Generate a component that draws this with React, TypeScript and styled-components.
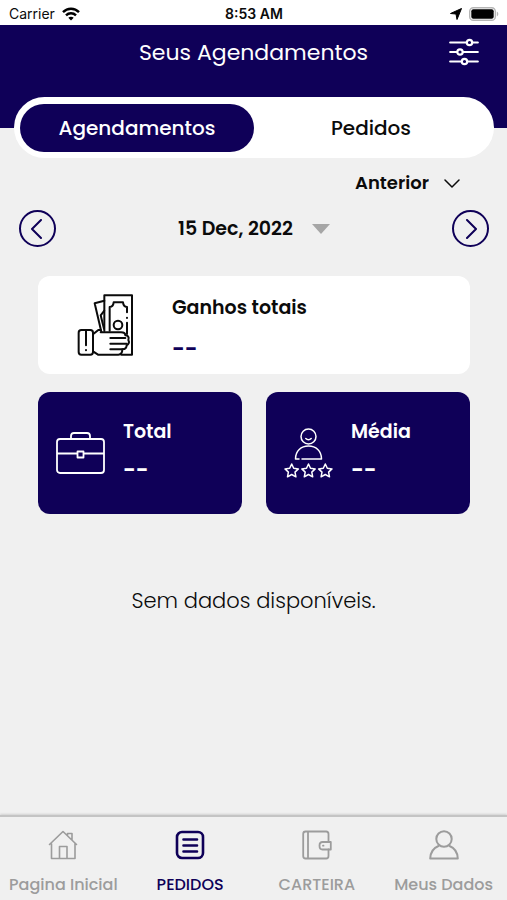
import React, { useState } from "react";
import styled, { createGlobalStyle } from "styled-components";

const navy = "#0f0058";
const page = "#f0f0f0";
const muted = "#9c9c9c";

const GlobalStyle = createGlobalStyle`
  * { box-sizing: border-box; }
  body { margin: 0; background: ${page}; }
  button, select { font: inherit; color: inherit; background: none; border: 0; padding: 0; cursor: pointer; }
  svg { display: block; flex: none; }
`;

const Screen = styled.div`
  min-height: 100vh;
  display: flex;
  flex-direction: column;
  background: ${page};
  color: #0b0b0b;
  font-family: Poppins, Inter, sans-serif;
`;

const StatusBar = styled.div`
  height: 25px;
  padding: 2px 8px 0 9px;
  display: grid;
  grid-template-columns: 1fr auto 1fr;
  align-items: center;
  background: #fff;
  font-family: Inter, sans-serif;
  font-size: 14px;
  line-height: 20px;
`;

const StatusGroup = styled.div<{ $end?: boolean }>`
  display: flex;
  align-items: center;
  gap: 7px;
  justify-content: ${(p) => (p.$end ? "flex-end" : "flex-start")};
`;

const Clock = styled.span`
  font-weight: 600;
`;

const Header = styled.header`
  height: 103px;
  padding: 9px 28px 0;
  display: grid;
  grid-template-columns: 30px 1fr 30px;
  align-items: start;
  background: ${navy};
  color: #fff;
`;

const Title = styled.h1`
  grid-column: 2;
  margin: 0;
  text-align: center;
  font-size: 22px;
  line-height: 38px;
  font-weight: 400;
`;

const IconButton = styled.button`
  height: 36px;
  display: flex;
  align-items: center;
`;

const Tabs = styled.div`
  margin: -31px 13px 0 14px;
  padding: 7px 6px 6px;
  display: grid;
  grid-template-columns: 1fr 1fr;
  background: #fff;
  border-radius: 31px;
`;

const Tab = styled.button<{ $active: boolean }>`
  height: 48px;
  border-radius: 24px;
  font-size: 20px;
  font-weight: 500;
  background: ${(p) => (p.$active ? navy : "transparent")};
  color: ${(p) => (p.$active ? "#fff" : "#0b0b0b")};
`;

const Filter = styled.label`
  align-self: flex-end;
  margin: 10px 47px 0 0;
  display: flex;
  align-items: center;
  gap: 15px;
`;

const FilterSelect = styled.select`
  appearance: none;
  field-sizing: content;
  font-size: 18px;
  line-height: 30px;
  font-weight: 600;
`;

const DateRow = styled.div`
  margin-top: 12px;
  padding: 0 18px 0 19px;
  display: flex;
  align-items: center;
  justify-content: space-between;
`;

const RoundButton = styled.button`
  width: 37px;
  height: 37px;
  display: grid;
  place-items: center;
  border: 2px solid ${navy};
  border-radius: 50%;
  color: ${navy};
`;

const DateButton = styled.button`
  display: flex;
  align-items: center;
  gap: 19px;
  font-size: 19px;
  font-weight: 600;
`;

const Cards = styled.section`
  margin: 29px 37px 0 38px;
  display: grid;
  grid-template-columns: 1fr 1fr;
  gap: 18px 24px;
`;

const EarningsCard = styled.article`
  grid-column: 1 / -1;
  height: 98px;
  padding-left: 39px;
  display: flex;
  align-items: center;
  gap: 38px;
  background: #fff;
  border-radius: 12px;
`;

const StatCard = styled.article`
  height: 122px;
  padding-left: 18px;
  display: flex;
  align-items: center;
  gap: 18px;
  background: ${navy};
  color: #fff;
  border-radius: 12px;
`;

const Figures = styled.div<{ $compact?: boolean }>`
  display: grid;
  gap: ${(p) => (p.$compact ? "3px" : "6px")};
  padding: ${(p) => (p.$compact ? "0 0 4px" : "8px 0 0")};
`;

const Label = styled.h2`
  margin: 0;
  font-size: 19px;
  line-height: 36px;
  font-weight: 600;
`;

const Value = styled.p<{ $accent?: boolean }>`
  margin: 0;
  font-size: 22px;
  line-height: 36px;
  font-weight: 600;
  color: ${(p) => (p.$accent ? navy : "inherit")};
`;

const Empty = styled.p`
  margin: 69px 20px;
  text-align: center;
  font-size: 21px;
  line-height: 36px;
  font-weight: 300;
`;

const Nav = styled.nav`
  height: 85px;
  margin-top: auto;
  padding-top: 13px;
  display: grid;
  grid-template-columns: repeat(4, 1fr);
  border-top: 2px solid #c4c4c4;
  box-shadow: 0 -1px 2px #d0d0d0;
`;

const NavItem = styled.a<{ $active?: boolean }>`
  display: flex;
  flex-direction: column;
  align-items: center;
  gap: 13px;
  text-decoration: none;
  white-space: nowrap;
  font-size: 16px;
  line-height: 24px;
  font-weight: 500;
  color: ${(p) => (p.$active ? navy : muted)};
`;

const WifiIcon = () => (
  <svg width="18" height="14" viewBox="0 0 18 14" fill="none" stroke="#000" strokeWidth="2.4" aria-hidden="true">
    <path d="M1 5.2C5.4.6 12.6.6 17 5.2M4 8.4c2.8-2.8 7.2-2.8 10 0" />
    <path d="M9 13.6 6.3 10.8c1.5-1.4 3.9-1.4 5.4 0z" fill="#000" stroke="none" />
  </svg>
);

const LocationIcon = () => (
  <svg width="12" height="12" viewBox="0 0 12 12" aria-hidden="true">
    <path d="M11.5.5 7 11.5 6 6 .5 5.5z" fill="#000" stroke="#000" strokeLinejoin="round" />
  </svg>
);

const BatteryIcon = () => (
  <svg width="30" height="14" viewBox="0 0 30 14" aria-hidden="true">
    <rect x=".7" y=".7" width="25.6" height="12.6" rx="3.6" fill="#fff" stroke="#b5b5b5" strokeWidth="1.4" />
    <rect x="2.3" y="2.3" width="22.4" height="9.4" rx="2" fill="#000" />
    <path d="M27.8 4.6c2 .8 2 4 0 4.800z" fill="#b5b5b5" />
  </svg>
);

const SlidersIcon = () => (
  <svg width="30" height="28" viewBox="0 0 30 28" fill={navy} stroke="#fff" strokeWidth="2.2" strokeLinecap="round" aria-hidden="true">
    <path d="M1.200 4.500h27.600M1.200 14h27.600M1.200 23.500h27.600" />
    <circle cx="20.500" cy="4.500" r="2.700" />
    <circle cx="11" cy="14" r="2.700" />
    <circle cx="15.500" cy="23.500" r="2.700" />
  </svg>
);

const Chevron = ({ d, w, h, sw }: { d: string; w: number; h: number; sw: number }) => (
  <svg width={w} height={h} viewBox={`0 0 ${w} ${h}`} fill="none" stroke="currentColor" strokeWidth={sw} strokeLinecap="round" strokeLinejoin="round" aria-hidden="true">
    <path d={d} />
  </svg>
);

const CaretIcon = () => (
  <svg width="18" height="10" viewBox="0 0 18 10" aria-hidden="true">
    <path d="M0 0h18L9 10z" fill="#a6a6a6" />
  </svg>
);

const MoneyIcon = () => (
  <svg width="57" height="63" viewBox="20 16 171 189" fill="none" stroke="#0b0b0b" strokeWidth="6" strokeLinecap="round" strokeLinejoin="round" aria-hidden="true">
    <rect x="25" y="124" width="43" height="74" rx="8" />
    <path d="M47 125v45M47 184v1" />
    <path d="M68 137 84 124l7 0" />
    <path d="M102 127V20h83v178h-32" />
    <path d="M102 36 73 44l20 85" />
    <path d="M102 66 91 80l10 40" />
    <path d="M118 126V55c8-1 11-4 12-14h28c1 9 4 13 12 14v16M170 87v1M170 102v34" />
    <circle cx="143" cy="109" r="13" />
    <path d="M91 131h61c8 0 13 3 13 9 8 1 12 5 9 14 4 7 1 13-5 16 0 8-4 12-13 12 0 10-4 16-12 16H83l-15-10" />
    <path d="M120 148h45M120 165h49M120 182h36" />
  </svg>
);

const BriefcaseIcon = () => (
  <svg width="49" height="42" viewBox="0 0 49 42" fill="none" stroke="#fff" strokeWidth="1.8" strokeLinejoin="round" aria-hidden="true">
    <rect x="1" y="7" width="47" height="34" rx="3" />
    <path d="M15 7V4c0-2 1-3 3-3h13c2 0 3 1 3 3v3M1 21.500h20M28 21.500h20" />
    <rect x="21.500" y="19.500" width="6" height="6" />
  </svg>
);

const star = "m0-6.500 2 4.300 4.700.6-3.400 3.200.9 4.700L0 4 -4.200 6.300l.9-4.700-3.400-3.200 4.700-.6z";

const RatingIcon = () => (
  <svg width="49" height="50" viewBox="0 0 49 50" fill="none" stroke="#fff" strokeWidth="1.500" strokeLinecap="round" strokeLinejoin="round" aria-hidden="true">
    <circle cx="24.500" cy="8.500" r="7.500" />
    <path d="M21.800 10.500c1.500 1.600 3.900 1.600 5.400 0" />
    <path d="M15 31h-3.500C11.500 23 17 18 24.500 18s13 5 13 13H18" />
    {[7.7, 24.5, 41.3].map((x) => (
      <path key={x} d={star} transform={`translate(${x} 42.500)`} />
    ))}
  </svg>
);

const NavIcon = ({ children, sw = 1.600 }: { children: React.ReactNode; sw?: number }) => (
  <svg width="30" height="30" viewBox="0 0 30 30" fill="none" stroke="currentColor" strokeWidth={sw} strokeLinecap="round" strokeLinejoin="round" aria-hidden="true">
    {children}
  </svg>
);

const HomeIcon = () => (
  <NavIcon>
    <path d="M3.500 13.500v15h23.500v-15M11.500 28.500v-12H19v12M1.500 14.500 15 1.500l13.500 13M19.500 5V3.500h4.500V10" />
  </NavIcon>
);

const OrdersIcon = () => (
  <NavIcon sw={2.600}>
    <rect x="2" y="2" width="26" height="26" rx="5" />
    <path d="M8.500 9.500h13.500M8.500 15.500h13.500M8.500 21.500h13.500" />
  </NavIcon>
);

const WalletIcon = () => (
  <NavIcon sw={1.800}>
    <path d="M26.500 12V4c0-1.500-.8-2.500-2.300-2.500H3.500C2 1.500 1.200 2.500 1.200 4v22c0 1.500.8 2.500 2.300 2.500h20.700c1.500 0 2.300-1 2.300-2.500v-6.500M6 1.500v27" />
    <path d="M20.500 12h8.300v7.500h-8.300c-4 0-4-7.500 0-7.500zM21 15.700h.5" />
  </NavIcon>
);

const UserIcon = () => (
  <NavIcon sw={2}>
    <circle cx="15" cy="9" r="7.700" />
    <path d="M9.500 16C4.500 18 1.500 22 1.200 28.500h27.600C28.500 22 25.500 18 20.500 16" />
  </NavIcon>
);

export default function App() {
  const [tab, setTab] = useState(0);
  return (
    <Screen>
      <GlobalStyle />
      <StatusBar>
        <StatusGroup>
          <span>Carrier</span>
          <WifiIcon />
        </StatusGroup>
        <Clock>8:53 AM</Clock>
        <StatusGroup $end>
          <LocationIcon />
          <BatteryIcon />
        </StatusGroup>
      </StatusBar>
      <Header>
        <Title>Seus Agendamentos</Title>
        <IconButton aria-label="Filtros">
          <SlidersIcon />
        </IconButton>
      </Header>
      <Tabs role="tablist">
        {["Agendamentos", "Pedidos"].map((name, i) => (
          <Tab key={name} role="tab" aria-selected={tab === i} $active={tab === i} onClick={() => setTab(i)}>
            {name}
          </Tab>
        ))}
      </Tabs>
      <Filter>
        <FilterSelect aria-label="Período">
          <option>Anterior</option>
        </FilterSelect>
        <Chevron d="M1 1l7 7 7-7" w={16} h={9} sw={1.500} />
      </Filter>
      <DateRow>
        <RoundButton aria-label="Dia anterior">
          <Chevron d="M12 1 3 10l9 9" w={18} h={20} sw={2} />
        </RoundButton>
        <DateButton>
          15 Dec, 2022
          <CaretIcon />
        </DateButton>
        <RoundButton aria-label="Próximo dia">
          <Chevron d="M6 1l9 9-9 9" w={18} h={20} sw={2} />
        </RoundButton>
      </DateRow>
      <Cards>
        <EarningsCard>
          <MoneyIcon />
          <Figures>
            <Label>Ganhos totais</Label>
            <Value $accent>--</Value>
          </Figures>
        </EarningsCard>
        <StatCard>
          <BriefcaseIcon />
          <Figures $compact>
            <Label>Total</Label>
            <Value>--</Value>
          </Figures>
        </StatCard>
        <StatCard>
          <RatingIcon />
          <Figures $compact>
            <Label>Média</Label>
            <Value>--</Value>
          </Figures>
        </StatCard>
      </Cards>
      <Empty>Sem dados disponíveis.</Empty>
      <Nav>
        <NavItem href="#inicio">
          <HomeIcon />
          Pagina Inicial
        </NavItem>
        <NavItem href="#pedidos" $active aria-current="page">
          <OrdersIcon />
          PEDIDOS
        </NavItem>
        <NavItem href="#carteira">
          <WalletIcon />
          CARTEIRA
        </NavItem>
        <NavItem href="#dados">
          <UserIcon />
          Meus Dados
        </NavItem>
      </Nav>
    </Screen>
  );
}
